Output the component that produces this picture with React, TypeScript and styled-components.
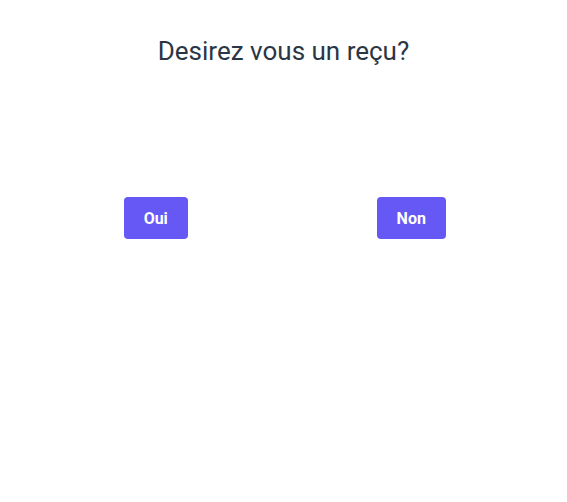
import styled, { createGlobalStyle } from 'styled-components';

const GlobalStyle = createGlobalStyle`
    html, body {
        margin: 0;
        padding: 0;
        background: #ffffff;
        font-family: Roboto, "Liberation Sans", sans-serif;
    }
`;

const Page = styled.div`
    display: flex;
    flex-direction: column;
    align-items: center;
    padding-top: 34px;
    min-height: 502px;
    box-sizing: border-box;
`;

const Title = styled.h1`
    margin: 0;
    font-size: 26px;
    font-weight: 400;
    line-height: 34px;
    color: #2b3645;
`;

const Choices = styled.div`
    display: grid;
    grid-template-columns: 1fr 1fr;
    justify-items: center;
    width: 100%;
    box-sizing: border-box;
    padding: 0 28px;
    margin-top: 129px;
`;

const Choice = styled.button`
    height: 42px;
    padding: 0 20px;
    border: none;
    border-radius: 4px;
    background: #6558f5;
    color: #ffffff;
    font-family: Roboto, "Liberation Sans", sans-serif;
    font-size: 16px;
    font-weight: 700;
    cursor: pointer;
`;

export default function App() {
    return (
        <>
            <GlobalStyle />
            <Page>
                <Title>Desirez vous un reçu?</Title>
                <Choices>
                    <Choice>Oui</Choice>
                    <Choice>Non</Choice>
                </Choices>
            </Page>
        </>
    );
}
